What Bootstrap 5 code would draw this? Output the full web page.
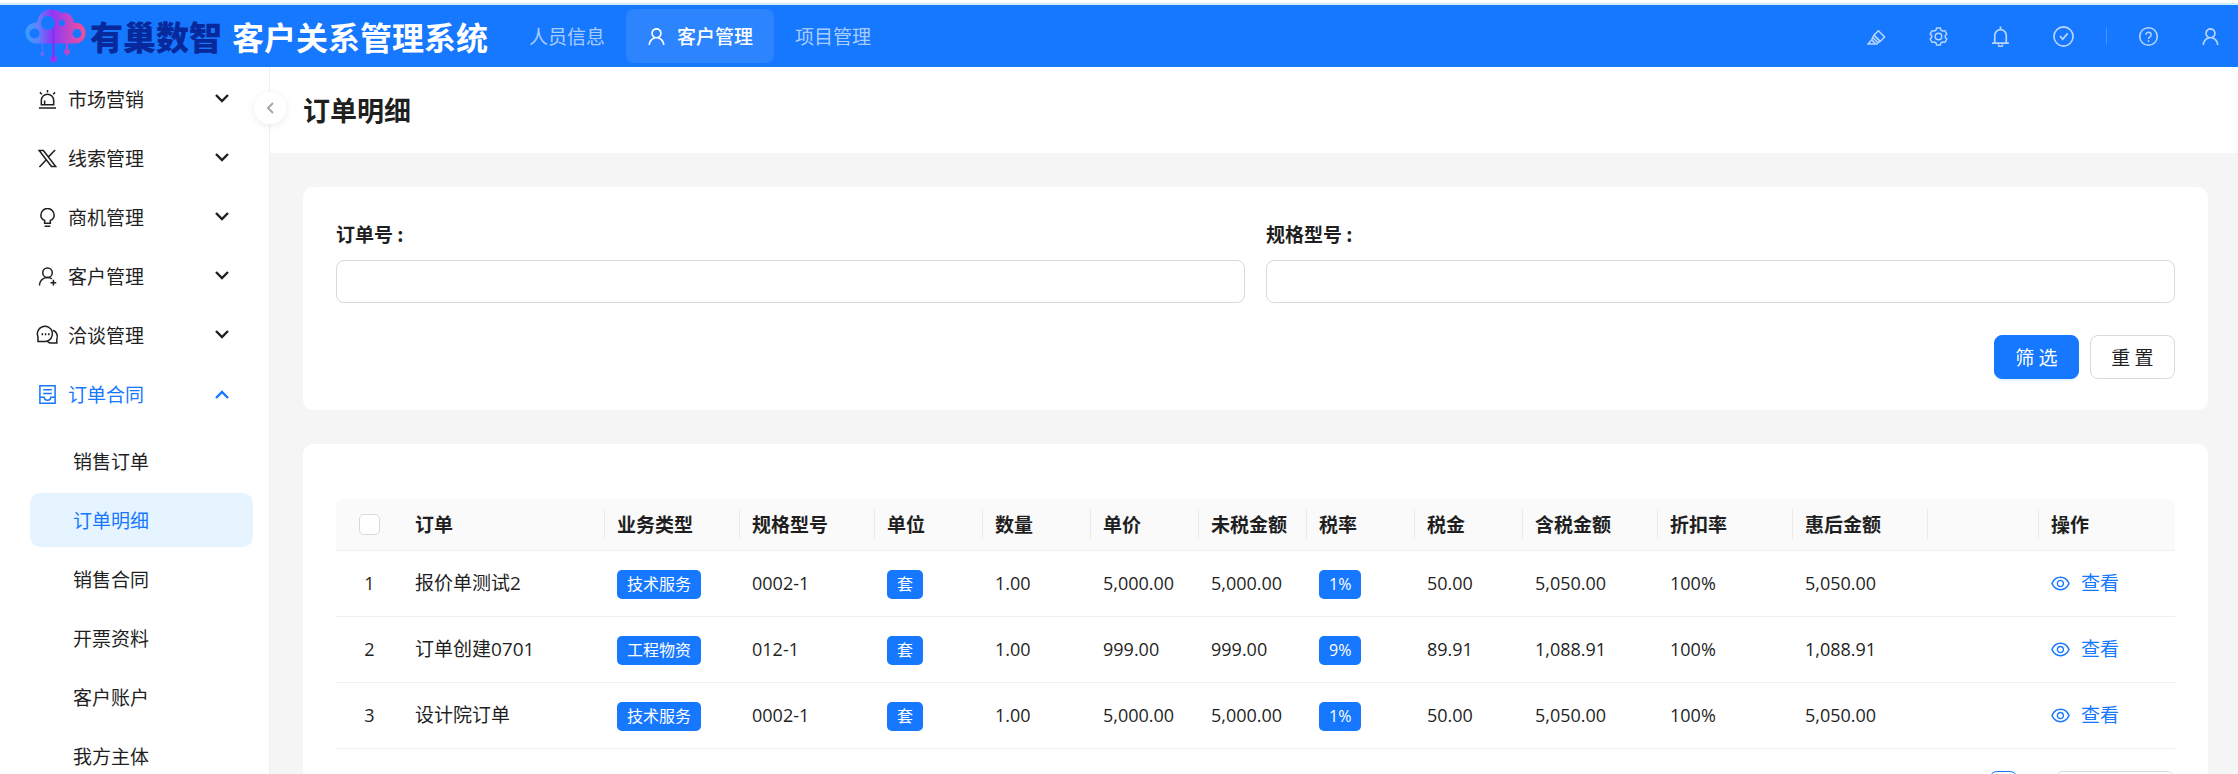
<!DOCTYPE html>
<html lang="zh-CN">
<head>
<meta charset="utf-8">
<meta name="viewport" content="width=device-width, initial-scale=1">
<title>订单明细 - 客户关系管理系统</title>
<link rel="stylesheet" href="https://cdn.jsdelivr.net/npm/bootstrap@5.3.0/dist/css/bootstrap.min.css">
<style>
:root{--brand:#1677ff;--ink:#1f1f1f;--line:#f0f0f0}
body{font-family:"Noto Sans CJK SC",sans-serif;font-size:19px;line-height:30px;color:var(--ink);background:#fff}
a{text-decoration:none;color:inherit}
.ico{width:19px;height:19px;flex:none;fill:none;stroke:currentColor;stroke-width:1.6}
.ico.solid{fill:currentColor;stroke:none}
.top-edge{height:5px;border-bottom:2px solid #d3eef8}
.topbar{height:62px;background:var(--brand);color:#fff}
.logo-mark{width:62px;height:54px}
.logo-name{font-size:33px;font-weight:900;color:#08299c;line-height:40px}
.sys-name{font-size:32px;font-weight:700;line-height:40px;margin-left:10px}
.top-nav{margin-left:20px}
.top-link{height:54px;padding:0 21px;gap:11px;border-radius:8px;color:rgba(255,255,255,.65)}
.top-link.active{color:#fff;background:rgba(255,255,255,.1);font-weight:500}
.tools{gap:43px;padding-right:18px;color:rgba(255,255,255,.7)}
.tools button{background:none;border:0;padding:0;color:inherit;display:flex;width:19px;height:19px;justify-content:center;align-items:center}
.tools .big{width:21px;height:21px}
.tool-sep{width:1px;height:18px;background:rgba(255,255,255,.2);margin:0 -11px}
.side{width:270px;border-right:1px solid var(--line);padding:5px 16px 0 30px}
.menu-item{height:54px;margin-bottom:5px;padding:0 24px 0 8px;gap:11px;border:0;background:none;color:inherit;width:100%;border-radius:10px}
.menu-item.open{color:var(--brand)}
.sub-item{height:54px;margin-bottom:5px;padding-left:43px;border-radius:10px}
.sub-item.active{background:#e6f4ff;color:var(--brand)}
.submenu{margin-top:13px}
.caret{width:14px;height:14px;fill:none;stroke:currentColor;stroke-width:2.4}
.side-scroll,.main-scroll{overflow-y:auto;scrollbar-width:none}
.side-scroll::-webkit-scrollbar,.main-scroll::-webkit-scrollbar{display:none}
.collapse-btn{position:absolute;left:254px;top:25px;width:32px;height:32px;border:0;border-radius:50%;background:#fff;color:#a6a6a6;box-shadow:0 2px 8px rgba(0,0,0,.08);z-index:2}
.page-head{height:86px;padding:0 33px}
.page-head h1{font-size:27px;font-weight:700;line-height:36px}
.main-scroll{background:#f5f5f5}
.panels{padding:34px 30px 34px 33px;gap:34px}
.panel{background:#fff;border-radius:10px;padding:31px 33px}
.panel label{font-weight:700;margin-bottom:11px}
.panel .form-control{height:43px;border-color:#d9d9d9;border-radius:8px}
.fields{gap:21px}
.act{height:44px;width:85px;padding:0;border-radius:8px;font-size:19px}
.act-main{background:var(--brand);border-color:var(--brand);color:#fff;box-shadow:0 2px 0 rgba(5,145,255,.1)}
.act-plain{border-color:#d9d9d9;color:var(--ink);background:#fff}
.grid-table{table-layout:fixed;width:100%;margin:0;color:var(--ink)}
.grid-table th,.grid-table td{padding:0 12px;border-bottom:1px solid var(--line);vertical-align:middle;white-space:nowrap;color:inherit}
.grid-table th{height:51px;background:#fafafa;font-weight:700;position:relative}
.grid-table td{height:66px;font-family:"Open Sans","Noto Sans CJK SC",sans-serif}
.grid-table td.num{font-size:18px}
.grid-table th.split::after{content:"";position:absolute;right:0;top:10px;height:30px;width:1px;background:#ebebeb}
.grid-table th:first-child{border-top-left-radius:8px}
.grid-table th:last-child{border-top-right-radius:8px}
.grid-table .form-check-input{width:21px;height:21px;margin:0 auto;border-color:#d9d9d9;border-radius:5px;display:block}
.tag{display:inline-flex;align-items:center;height:29px;padding:0 10px;border-radius:5px;background:var(--brand);color:#fff;font-size:16px;vertical-align:middle}
.view{color:var(--brand);gap:11px}
.page-no{width:29px;height:32px;border:1px solid var(--brand);border-radius:8px;background:#fff;color:var(--brand);font-size:16px;line-height:16px;padding:0}
.page-size{width:120px;height:32px;border-color:#d9d9d9;border-radius:8px;font-size:16px;line-height:16px;padding:0 12px}
</style>
</head>
<body class="vh-100 d-flex flex-column overflow-hidden">
<div class="top-edge flex-shrink-0"></div>
<header class="topbar d-flex align-items-center flex-shrink-0">
  <a href="#" class="d-flex align-items-center ps-4 text-nowrap">
    <svg class="logo-mark flex-shrink-0" viewBox="23 9 62 54" aria-hidden="true">
      <defs><linearGradient id="cloud" gradientUnits="userSpaceOnUse" x1="23" y1="0" x2="84" y2="0"><stop offset="0" stop-color="#31a2ff"/><stop offset=".22" stop-color="#5a86fb"/><stop offset=".46" stop-color="#8f35f5"/><stop offset=".7" stop-color="#b845d0"/><stop offset="1" stop-color="#fa4c95"/></linearGradient></defs>
      <g fill="url(#cloud)">
        <path fill-rule="evenodd" d="M34 43.500A10.500 10.500 0 1 1 36 22.500C37 14 43 9.500 50 9.500C55 9.500 58 11 60 13C66 11 72 15 73 23C80 22 84.500 27 84.500 33C84.500 39 80 43.500 74 43.500ZM33.500 28.500A5 5 0 1 0 33.500 38.500A5 5 0 1 0 33.500 28.500ZM47 16A7 7 0 1 0 47 30A7 7 0 1 0 47 16ZM61 20A3 3 0 1 0 61 26A3 3 0 1 0 61 20ZM76 29A4.500 4.500 0 1 0 76 38A4.500 4.500 0 1 0 76 29Z"/>
        <path d="M51.500 43h2v14h-2zM65 43h2v8h-2zM41 43h1v10h-1z"/>
        <circle cx="52.500" cy="59" r="3.500"/><circle cx="66" cy="52" r="3"/><circle cx="41.500" cy="54" r="2"/>
      </g>
      <path d="M52.500 28V58" stroke="#7d2cf0" stroke-width="1.500" fill="none"/>
    </svg>
    <span class="logo-name ms-1">有巢数智</span>
    <span class="sys-name">客户关系管理系统</span>
  </a>
  <nav class="top-nav d-flex text-nowrap">
    <a href="#" class="top-link d-flex align-items-center">人员信息</a>
    <a href="#" class="top-link active d-flex align-items-center" aria-current="page"><svg class="ico solid" viewBox="64 64 896 896"><use href="#i-user"/></svg>客户管理</a>
    <a href="#" class="top-link d-flex align-items-center">项目管理</a>
  </nav>
  <div class="tools d-flex align-items-center ms-auto">
    <button type="button" aria-label="主题"><svg class="ico" viewBox="0 0 20 20"><path d="M12 4l6.500 6.500-4.500 4.500-6.500-6.500zM7.500 8.500L6 11l5.500 5.500 2.500-1.500M6 11l-1 2.500 3.500 4M5 13.500L1 18h9.500l1-1.500M9 10.500l4 4"/></svg></button>
    <button type="button" aria-label="设置"><svg class="ico" viewBox="-10.500 -10.500 21 21" stroke-linejoin="round"><defs><path id="tooth" d="M-4-6.600L-2.700-7.100-2.100-9.400H2.100L2.700-7.100 4-6.600"/></defs><use href="#tooth"/><use href="#tooth" transform="rotate(60)"/><use href="#tooth" transform="rotate(120)"/><use href="#tooth" transform="rotate(180)"/><use href="#tooth" transform="rotate(240)"/><use href="#tooth" transform="rotate(300)"/><circle r="3.600"/></svg></button>
    <button type="button" aria-label="通知"><svg class="ico big" viewBox="0 0 20 20"><path d="M4.500 16V9a5.500 5.500 0 0 1 11 0v7M2 16.300h16M8 17.500a2 2 0 0 0 4 0M10 .500v3"/></svg></button>
    <button type="button" class="big" aria-label="待办"><svg class="ico big" viewBox="0 0 20 20"><circle cx="10" cy="10" r="9.100"/><path d="M6.500 9.500l2.800 3 4.700-5.500"/></svg></button>
    <span class="tool-sep"></span>
    <button type="button" aria-label="帮助"><svg class="ico" viewBox="0 0 20 20"><circle cx="10" cy="10" r="9.200"/><path d="M7.200 8.200a2.800 2.600 0 1 1 4.300 2.100c-1 .600-1.500 1-1.500 2.200M10 14v1.700"/></svg></button>
    <button type="button" aria-label="账户"><svg class="ico solid" viewBox="64 64 896 896"><path id="i-user" d="M858.500 763.600a374 374 0 00-80.600-119.500 375.630 375.630 0 00-119.500-80.600c-.400-.200-.800-.300-1.200-.500C719.500 518 760 444.700 760 362c0-137-111-248-248-248S264 225 264 362c0 82.700 40.500 156 102.800 201.100-.400.200-.800.300-1.200.500-44.800 18.900-85 46-119.500 80.600a375.630 375.630 0 00-80.600 119.500A371.700 371.700 0 00136 901.800a8 8 0 008 8.200h60c4.400 0 7.900-3.500 8-7.800 2-77.200 33-149.500 87.800-204.300 56.700-56.700 132-87.900 212.200-87.900s155.500 31.200 212.200 87.900C779 752.700 810 825 812 902.200c.100 4.400 3.600 7.800 8 7.800h60a8 8 0 008-8.200c-1-47.800-10.900-94.300-29.500-138.200zM512 534c-45.900 0-89.100-17.900-121.600-50.400S340 407.900 340 362c0-45.900 17.900-89.100 50.400-121.600S466.100 190 512 190s89.100 17.900 121.600 50.400S684 316.100 684 362c0 45.900-17.900 89.100-50.400 121.600S557.900 534 512 534z"/></svg></button>
  </div>
</header>

<div class="d-flex flex-grow-1 position-relative" style="min-height:0">
  <aside class="side side-scroll flex-shrink-0">
    <nav>
      <button type="button" class="menu-item d-flex align-items-center"><svg class="ico" viewBox="0 0 20 20"><path d="M3.500 15.500V11a6.500 6.500 0 0 1 13 0v4.500zM1 19h18M7 15v-4M10 0v2.500M2 2.500l2 2M18 2.500l-2 2"/></svg>市场营销<svg class="caret ms-auto" viewBox="0 0 14 14"><path d="M1 3l6 6 6-6"/></svg></button>
      <button type="button" class="menu-item d-flex align-items-center"><svg class="ico" viewBox="0 0 20 20"><path d="M1.200 1.500h4.500l13 17h-4.500zM18 1l-7.500 7.800M9 11L1.500 19"/></svg>线索管理<svg class="caret ms-auto" viewBox="0 0 14 14"><path d="M1 3l6 6 6-6"/></svg></button>
      <button type="button" class="menu-item d-flex align-items-center"><svg class="ico" viewBox="0 0 20 20"><path d="M7 16v-3C4.500 12 3 9.700 3 7.500a7 7 0 0 1 14 0c0 2.200-1.500 4.500-4 5.500v3zM7 19.200h6"/></svg>商机管理<svg class="caret ms-auto" viewBox="0 0 14 14"><path d="M1 3l6 6 6-6"/></svg></button>
      <button type="button" class="menu-item d-flex align-items-center"><svg class="ico" viewBox="0 0 20 20"><circle cx="10" cy="6" r="5"/><path d="M1.500 19.500c0-4 3-8.500 8.500-8.500 2 0 3.500.500 4.500 1.500M16.200 13.500v6M13.200 16.500h6"/></svg>客户管理<svg class="caret ms-auto" viewBox="0 0 14 14"><path d="M1 3l6 6 6-6"/></svg></button>
      <button type="button" class="menu-item d-flex align-items-center"><svg class="ico overflow-visible" viewBox="0 0 20 20"><path d="M0 16.200v-4.500a8 8 0 1 1 8.200 4.500zM15.800 4.500c3.800 1.500 5.500 5.500 4 9.300v4h-4.500c-2 .500-4-.200-5.200-1.600"/><path d="M3.800 8.700h1.600M7.200 8.700h1.600M10.600 8.700h1.600" stroke-width="2"/></svg>洽谈管理<svg class="caret ms-auto" viewBox="0 0 14 14"><path d="M1 3l6 6 6-6"/></svg></button>
      <button type="button" class="menu-item open d-flex align-items-center" aria-expanded="true"><svg class="ico" viewBox="0 0 20 20"><path d="M2 .800h16v18.400H2zM5.500 5h9M5.500 9h9M2 13h4.500c.500 4 6.500 4 7 0H18"/></svg>订单合同<svg class="caret ms-auto" viewBox="0 0 14 14"><path d="M1 11l6-6 6 6"/></svg></button>
      <div class="submenu">
        <a href="#" class="sub-item d-flex align-items-center">销售订单</a>
        <a href="#" class="sub-item active d-flex align-items-center">订单明细</a>
        <a href="#" class="sub-item d-flex align-items-center">销售合同</a>
        <a href="#" class="sub-item d-flex align-items-center">开票资料</a>
        <a href="#" class="sub-item d-flex align-items-center">客户账户</a>
        <a href="#" class="sub-item d-flex align-items-center">我方主体</a>
      </div>
    </nav>
  </aside>
  <button type="button" class="collapse-btn d-flex align-items-center justify-content-center p-0" aria-label="收起菜单"><svg width="12" height="14" viewBox="0 0 12 14" fill="none" stroke="currentColor" stroke-width="2"><path d="M9 2L4 7l5 5"/></svg></button>

  <main class="main-scroll flex-grow-1">
    <div class="page-head bg-white d-flex align-items-center"><h1 class="m-0">订单明细</h1></div>
    <div class="panels d-flex flex-column">
      <form class="panel pt-4">
        <div class="fields d-flex pt-2">
          <div class="flex-fill"><label for="orderNo" class="d-block">订单号 :</label><input id="orderNo" type="text" class="form-control"></div>
          <div class="flex-fill"><label for="model" class="d-block">规格型号 :</label><input id="model" type="text" class="form-control"></div>
        </div>
        <div class="d-flex justify-content-end mt-4 pt-2" style="gap:11px">
          <button type="button" class="btn act act-main">筛 选</button>
          <button type="reset" class="btn act act-plain">重 置</button>
        </div>
      </form>
      <section class="panel">
        <table class="table grid-table mt-4">
          <colgroup><col style="width:67px"><col style="width:202px"><col style="width:135px"><col style="width:135px"><col style="width:108px"><col style="width:108px"><col style="width:108px"><col style="width:108px"><col style="width:108px"><col style="width:108px"><col style="width:135px"><col style="width:135px"><col style="width:135px"><col style="width:111px"><col style="width:136px"></colgroup>
          <thead><tr>
            <th scope="col"><input class="form-check-input" type="checkbox" aria-label="全选"></th>
            <th scope="col" class="split">订单</th><th scope="col" class="split">业务类型</th><th scope="col" class="split">规格型号</th><th scope="col" class="split">单位</th><th scope="col" class="split">数量</th><th scope="col" class="split">单价</th><th scope="col" class="split">未税金额</th><th scope="col" class="split">税率</th><th scope="col" class="split">税金</th><th scope="col" class="split">含税金额</th><th scope="col" class="split">折扣率</th><th scope="col" class="split">惠后金额</th><th class="split"></th><th scope="col">操作</th>
          </tr></thead>
          <tbody>
            <tr><td class="num text-center">1</td><td>报价单测试2</td><td><span class="tag">技术服务</span></td><td class="num">0002-1</td><td><span class="tag">套</span></td><td class="num">1.00</td><td class="num">5,000.00</td><td class="num">5,000.00</td><td><span class="tag">1%</span></td><td class="num">50.00</td><td class="num">5,050.00</td><td class="num">100%</td><td class="num">5,050.00</td><td></td><td><a href="#" class="view d-flex align-items-center"><svg class="ico solid" viewBox="64 64 896 896"><use href="#i-eye"/></svg>查看</a></td></tr>
            <tr><td class="num text-center">2</td><td>订单创建0701</td><td><span class="tag">工程物资</span></td><td class="num">012-1</td><td><span class="tag">套</span></td><td class="num">1.00</td><td class="num">999.00</td><td class="num">999.00</td><td><span class="tag">9%</span></td><td class="num">89.91</td><td class="num">1,088.91</td><td class="num">100%</td><td class="num">1,088.91</td><td></td><td><a href="#" class="view d-flex align-items-center"><svg class="ico solid" viewBox="64 64 896 896"><use href="#i-eye"/></svg>查看</a></td></tr>
            <tr><td class="num text-center">3</td><td>设计院订单</td><td><span class="tag">技术服务</span></td><td class="num">0002-1</td><td><span class="tag">套</span></td><td class="num">1.00</td><td class="num">5,000.00</td><td class="num">5,000.00</td><td><span class="tag">1%</span></td><td class="num">50.00</td><td class="num">5,050.00</td><td class="num">100%</td><td class="num">5,050.00</td><td></td><td><a href="#" class="view d-flex align-items-center"><svg class="ico solid" viewBox="64 64 896 896"><path id="i-eye" d="M942.200 486.200C847.400 286.500 704.100 186 512 186c-192.200 0-335.400 100.500-430.200 300.300a60.300 60.300 0 000 51.500C176.600 737.500 319.900 838 512 838c192.200 0 335.400-100.500 430.200-300.300 7.700-16.200 7.700-35 0-51.500zM512 766c-161.300 0-279.400-81.800-362.700-254C232.600 339.800 350.700 258 512 258c161.300 0 279.400 81.800 362.700 254C791.500 684.200 673.400 766 512 766zm-4-430c-97.200 0-176 78.800-176 176s78.800 176 176 176 176-78.800 176-176-78.800-176-176-176zm0 288c-61.900 0-112-50.100-112-112s50.100-112 112-112 112 50.100 112 112-50.100 112-112 112z"/></svg>查看</a></td></tr>
          </tbody>
        </table>
        <div class="d-flex justify-content-end" style="gap:37px;margin-top:22px">
          <button type="button" class="page-no" aria-current="page">1</button>
          <select class="form-select page-size" aria-label="每页条数"><option>20 条/页</option></select>
        </div>
      </section>
    </div>
  </main>
</div>
<script src="https://cdn.jsdelivr.net/npm/bootstrap@5.3.0/dist/js/bootstrap.bundle.min.js"></script>
</body>
</html>
